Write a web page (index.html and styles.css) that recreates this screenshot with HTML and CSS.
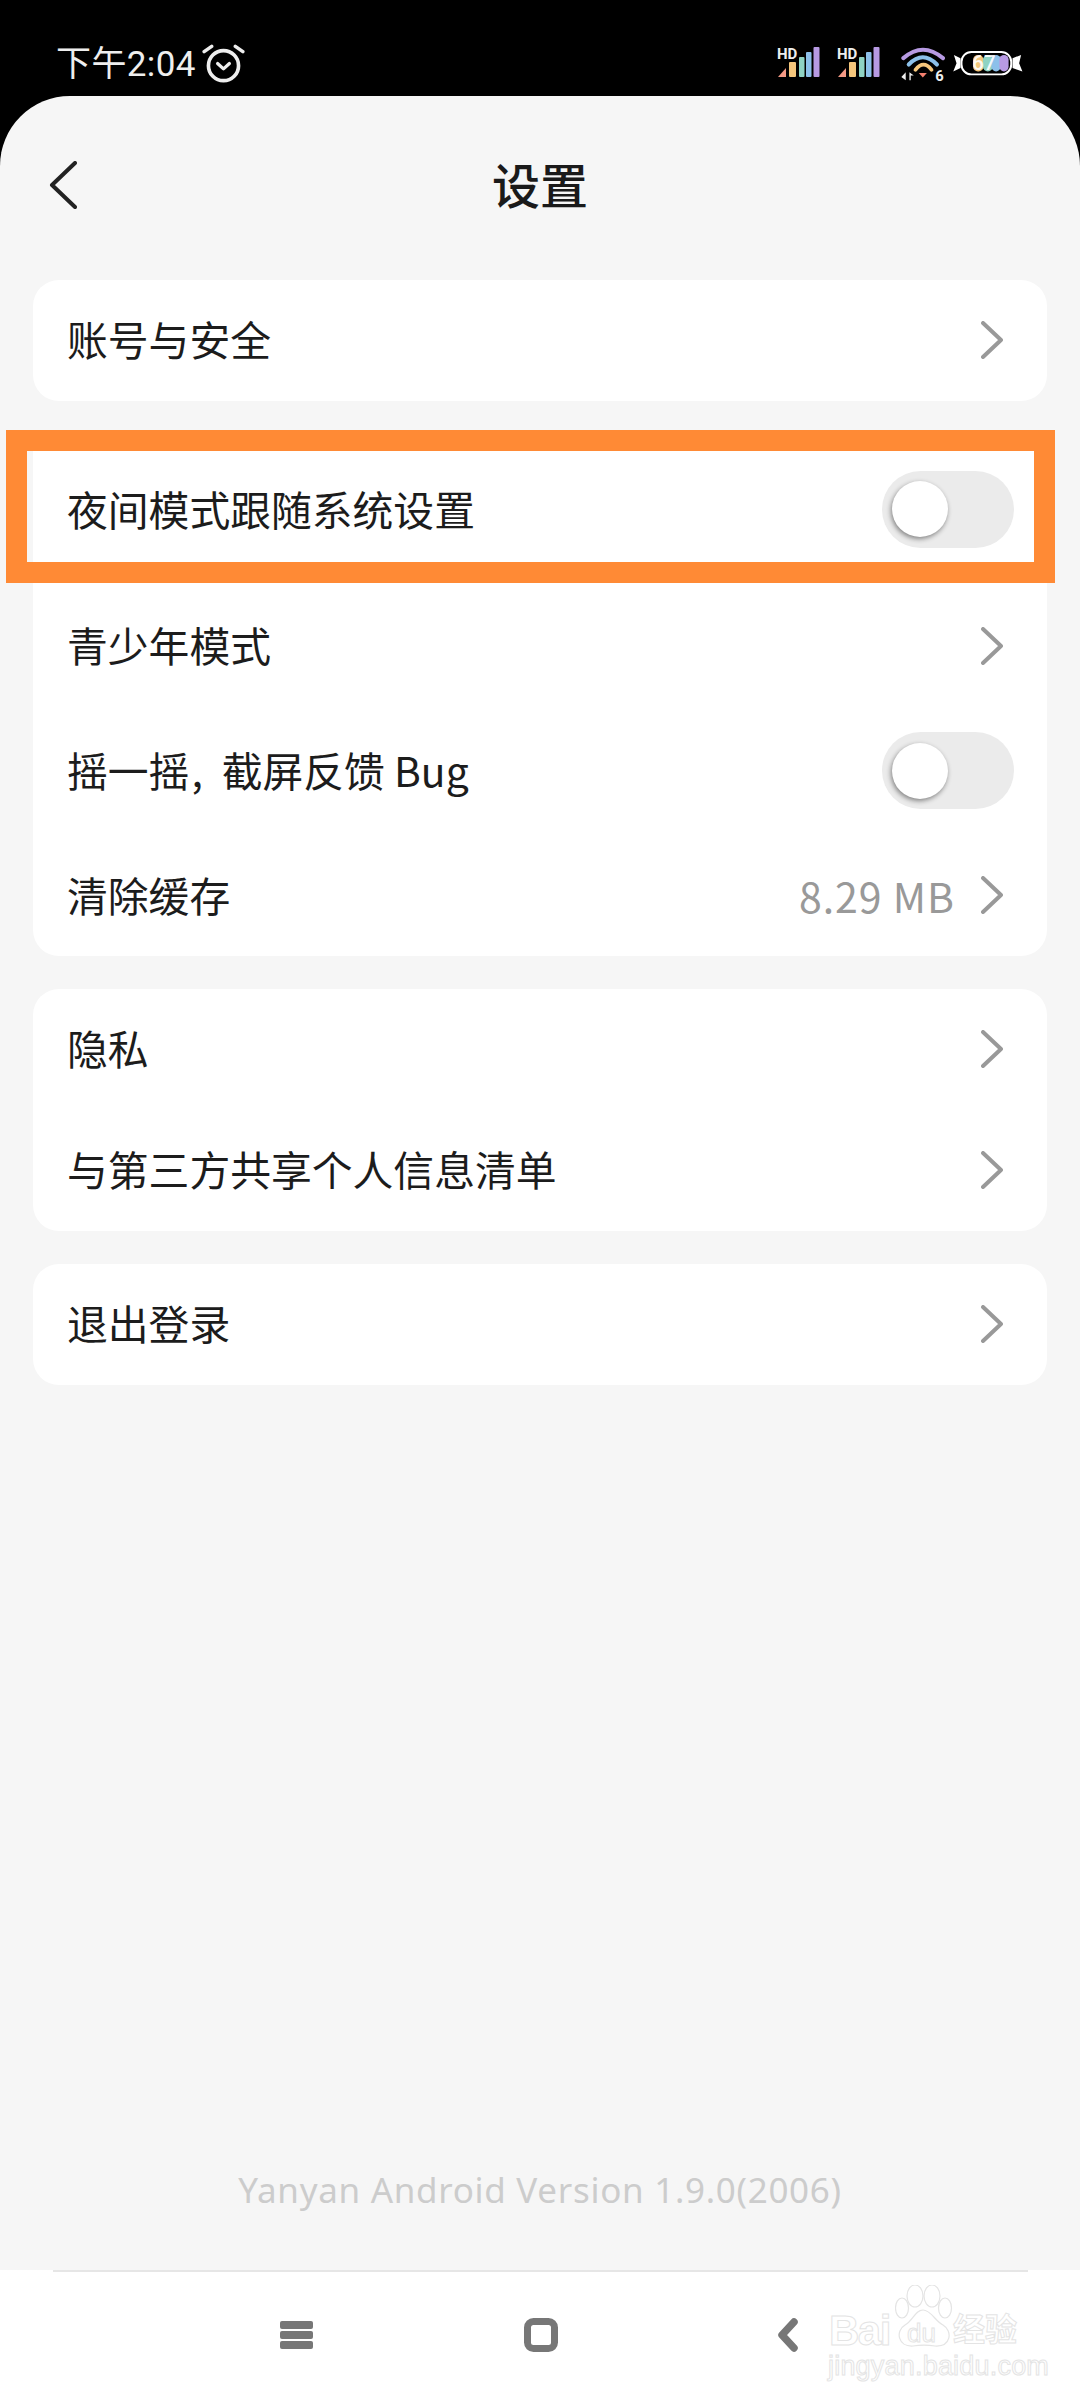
FILE: index.html
```html
<!DOCTYPE html>
<html lang="zh-CN">
<head>
<meta charset="utf-8">
<title>设置</title>
<link rel="stylesheet" href="styles.css">
</head>
<body>
<div class="screen">
  <div class="status">
    <div class="status-left">
      <span class="time">下午2:04</span>
      <svg class="alarm" viewBox="0 0 40 36" fill="none" stroke="#eee">
        <circle cx="20" cy="20" r="14" stroke-width="3.4"/>
        <path d="M2 7 L9 2 M31 2 L38 7" stroke-width="3.2" stroke-linecap="round"/>
        <path d="M14.500 18 L20 23 L25.500 18" stroke-width="3" stroke-linecap="round" stroke-linejoin="round"/>
      </svg>
    </div>
    <div class="status-right">
      <svg class="signal" viewBox="0 0 44 32">
        <path d="M1 31 L9 22 V31Z" fill="#f59a85"/>
        <rect x="12" y="16" width="7" height="15" rx="1" fill="#f5c67c"/>
        <rect x="22" y="11" width="5.500" height="20" rx="1" fill="#8fd3c3"/>
        <rect x="29" y="6" width="5.500" height="25" rx="1" fill="#8cc0ea"/>
        <rect x="36.500" y="1" width="6" height="30" rx="1" fill="#b79ae3"/>
        <text x="0" y="12.500" class="hd">HD</text>
      </svg>
      <svg class="signal second" viewBox="0 0 44 32">
        <path d="M1 31 L9 22 V31Z" fill="#f59a85"/>
        <rect x="12" y="16" width="7" height="15" rx="1" fill="#f5c67c"/>
        <rect x="22" y="11" width="5.500" height="20" rx="1" fill="#8fd3c3"/>
        <rect x="29" y="6" width="5.500" height="25" rx="1" fill="#8cc0ea"/>
        <rect x="36.500" y="1" width="6" height="30" rx="1" fill="#b79ae3"/>
        <text x="0" y="12.500" class="hd">HD</text>
      </svg>
      <svg class="wifi" viewBox="0 0 140 110" fill="none" stroke-linecap="round">
        <path d="M10 36 Q68 -14 128 36" stroke="#b79ae3" stroke-width="12"/>
        <path d="M26 55 Q68 12 110 55" stroke="#8cc0ea" stroke-width="12"/>
        <path d="M46 71 Q70 40 94 71" stroke="#f5c67c" stroke-width="11"/>
        <path d="M56 80 H80 L68 94Z" fill="#f4806f"/>
        <path d="M17 78 V102 L4 92Z M28 78 L41 88 H32 V102 H28Z" fill="#eee"/>
        <text x="105" y="103" class="wifi-six">6</text>
      </svg>
      <svg class="battery" viewBox="0 0 215 85">
        <path d="M24 28 L4 18 L12 43 L2 68 L24 58Z M182 28 L208 18 L202 43 L212 68 L182 58Z" fill="#fff"/>
        <rect x="27" y="9" width="151" height="68" rx="30" fill="#000" stroke="#fff" stroke-width="6"/>
        <rect x="62" y="18" width="32" height="50" rx="15" fill="#f5c67c"/>
        <rect x="92" y="18" width="30" height="50" rx="15" fill="#8fd3c3"/>
        <rect x="118" y="18" width="28" height="50" rx="14" fill="#8cc0ea"/>
        <rect x="142" y="18" width="28" height="50" rx="14" fill="#b79ae3"/>
        <text x="60" y="63" class="batt-num">67</text>
      </svg>
    </div>
  </div>

  <main class="app">
    <header class="header">
      <svg class="back" viewBox="0 0 28 48" fill="none" stroke="#222" stroke-width="4" stroke-linecap="round" stroke-linejoin="round">
        <path d="M26 2 L3 24 L26 46"/>
      </svg>
      <h1 class="title">设置</h1>
    </header>

    <div class="cards">
      <section class="card">
        <div class="row"><span class="label">账号与安全</span><svg class="chev" viewBox="0 0 22 38"><path d="M2 2 L20 19 L2 36"/></svg></div>
      </section>

      <section class="card">
        <div class="row highlight">
          <span class="label">夜间模式跟随系统设置</span>
          <span class="toggle"><span class="knob"></span></span>
        </div>
        <div class="row"><span class="label">青少年模式</span><svg class="chev" viewBox="0 0 22 38"><path d="M2 2 L20 19 L2 36"/></svg></div>
        <div class="row tall">
          <span class="label">摇一摇<span class="comma">,</span>截屏反馈 Bug</span>
          <span class="toggle"><span class="knob"></span></span>
        </div>
        <div class="row short"><span class="label">清除缓存</span><span class="value">8.29 MB</span><svg class="chev" viewBox="0 0 22 38"><path d="M2 2 L20 19 L2 36"/></svg></div>
      </section>

      <section class="card">
        <div class="row"><span class="label">隐私</span><svg class="chev" viewBox="0 0 22 38"><path d="M2 2 L20 19 L2 36"/></svg></div>
        <div class="row"><span class="label">与第三方共享个人信息清单</span><svg class="chev" viewBox="0 0 22 38"><path d="M2 2 L20 19 L2 36"/></svg></div>
      </section>

      <section class="card">
        <div class="row"><span class="label">退出登录</span><svg class="chev" viewBox="0 0 22 38"><path d="M2 2 L20 19 L2 36"/></svg></div>
      </section>
    </div>

    <p class="version">Yanyan Android Version 1.9.0(2006)</p>

    <nav class="nav">
      <svg class="nav-menu" viewBox="0 0 33 28" fill="#777">
        <rect y="0" width="33" height="8" rx="2"/>
        <rect y="10" width="33" height="8" rx="2"/>
        <rect y="20" width="33" height="8" rx="2"/>
      </svg>
      <svg class="nav-home" viewBox="0 0 34 34" fill="none" stroke="#777" stroke-width="7">
        <rect x="3.500" y="3.500" width="27" height="27" rx="6"/>
      </svg>
      <svg class="nav-back" viewBox="0 0 21 34" fill="none" stroke="#777" stroke-width="7.500" stroke-linecap="round" stroke-linejoin="round">
        <path d="M17 4 L5 17 L17 30"/>
      </svg>
    </nav>

    <div class="watermark">
      <svg class="paw" viewBox="0 0 58 62" fill="none" stroke="#e4e4e4" stroke-width="1.200">
        <ellipse cx="20" cy="11" rx="8" ry="11"/>
        <ellipse cx="37" cy="11" rx="8" ry="11"/>
        <ellipse cx="7" cy="23" rx="6.500" ry="10"/>
        <ellipse cx="50" cy="23" rx="6.500" ry="10"/>
        <path d="M28 25 C20 25 18 36 10 40 C0 46 3 62 18 61 C24 60 34 60 40 61 C56 62 58 46 48 40 C40 36 36 25 28 25Z"/>
      </svg>
      <span class="wm-bai">Bai</span>
      <span class="wm-du">du</span>
      <span class="wm-cn">经验</span>
      <span class="wm-url">jingyan.baidu.com</span>
    </div>
  </main>
</div>
</body>
</html>
```

FILE: styles.css
```css
* { box-sizing: border-box; }
html, body { margin: 0; padding: 0; }
body { background: #000; font-family: "Noto Sans CJK SC", "Noto Sans", sans-serif; }
.screen { width: 1080px; height: 2400px; display: flex; flex-direction: column; background: #000; overflow: hidden; }

.status { height: 96px; flex: none; display: flex; justify-content: space-between; align-items: flex-start; padding: 42px 56px 0 56px; }
.status-left { display: flex; align-items: center; gap: 6px; }
.time { font-family: Roboto, "Noto Sans CJK SC", sans-serif; font-size: 35px; line-height: 44px; letter-spacing: 0.4px; color: #eee; padding-top: 1px; }
.alarm { width: 43px; height: 39px; display: block; margin-top: -3px; }
.status-right { display: flex; align-items: flex-start; margin-top: 4px; }
.signal { width: 44px; height: 32px; display: block; }
.signal.second { margin-left: 16px; }
.hd { font: 700 15px Roboto, sans-serif; fill: #eee; }
.wifi { width: 47px; height: 37px; display: block; margin-left: 19px; }
.wifi-six { font: 700 44px Roboto, sans-serif; fill: #eee; }
.battery { width: 72px; height: 28px; display: block; margin-left: 5px; margin-top: 3px; }
.batt-num { font: 500 62px Roboto, sans-serif; fill: #fff; opacity: .9; }

.app { position: relative; flex: 1; display: flex; flex-direction: column; background: #f6f6f6; border-radius: 70px 70px 0 0; }

.header { position: relative; height: 184px; flex: none; padding-bottom: 10px; display: flex; align-items: center; justify-content: center; }
.back { position: absolute; left: 49px; top: 65px; width: 28px; height: 48px; }
.title { margin: 0; font-size: 48px; line-height: 64px; font-weight: 500; color: #1a1a1a; }

.cards { display: flex; flex-direction: column; gap: 33px; padding: 0 33px; }
.card { background: #fff; border-radius: 26px; }
.row { height: 121px; display: flex; align-items: center; padding: 0 44px 2px 34px; }
.row.short { height: 120px; }
.row.tall { height: 129px; padding-right: 33px; }
.label { flex: 1; font-size: 40.800px; line-height: 56px; margin-bottom: 1px; color: #1c1c1c; }
.comma { margin: 0 19px 0 2px; }
.value { font-size: 41px; line-height: 56px; letter-spacing: 1px; margin-bottom: 1px; color: #999; margin-right: 26px; }
.chev { width: 22px; height: 38px; display: block; fill: none; stroke: #999; stroke-width: 4; stroke-linecap: round; stroke-linejoin: round; }

.row.highlight {
  height: 153px;
  margin: -4px -8px 3px -27px;
  padding: 5px 20px 0 40px;
  border: 21px solid #ff8a35;
  background: linear-gradient(90deg, #f6f6f6 6px, #fff 6px);
  position: relative;
}

.toggle { flex: none; width: 132px; height: 77px; border-radius: 39px; background: #ebebeb; display: flex; align-items: center; padding-left: 10px; }
.knob { width: 56px; height: 56px; border-radius: 50%; background: #fff; box-shadow: -1px 2px 5px rgba(0,0,0,.45); }

.version { margin: auto 0 0; font-family: "Noto Sans", "Noto Sans CJK SC", sans-serif; font-size: 35px; line-height: 48px; letter-spacing: 0.7px; text-align: center; color: #ccc; padding-bottom: 56px; }

.nav { height: 130px; flex: none; background: #fff; display: flex; align-items: center; position: relative; padding: 0 0 0 280px; }
.nav::before { content: ""; position: absolute; top: 0; left: 53px; right: 52px; height: 2px; background: #e6e6e6; }
.nav-menu { width: 33px; height: 28px; display: block; }
.nav-home { width: 34px; height: 34px; display: block; margin-left: 211px; }
.nav-back { width: 21px; height: 34px; display: block; margin-left: 219px; }

.watermark { position: absolute; left: 828px; top: 2189px; width: 196px; height: 96px; }
.paw { position: absolute; left: 67px; top: 0; width: 58px; height: 62px; }
.wm-bai, .wm-du, .wm-url, .wm-cn { position: absolute; -webkit-text-stroke: 1px #e4e4e4; color: #fff; white-space: nowrap; }
.wm-bai { left: 1px; top: 21px; font: 700 42px/50px "Liberation Sans", sans-serif; letter-spacing: -1.500px; }
.wm-du { left: 79px; top: 33px; font: 400 26px/30px "Liberation Sans", sans-serif; }
.wm-cn { left: 125px; top: 20px; font: 700 32px/44px "Noto Sans CJK SC", sans-serif; }
.wm-url { left: 0; top: 64px; font: 400 27px/34px "Liberation Sans", sans-serif; letter-spacing: 0.2px; }
```
